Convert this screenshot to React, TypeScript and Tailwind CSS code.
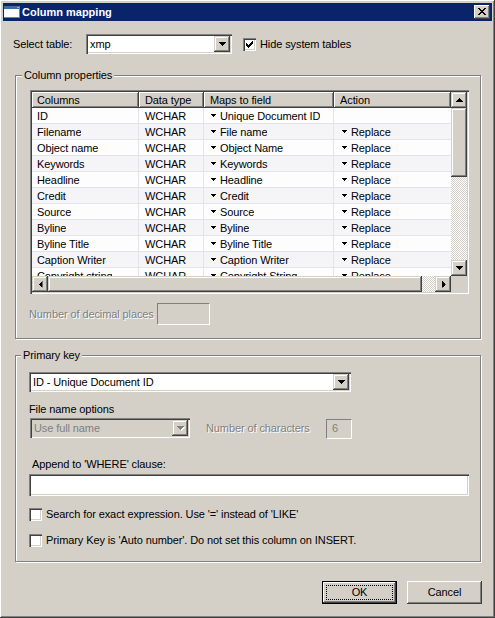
import React from "react";

// classic 3D edges
const sunken =
  "shadow-[inset_1px_1px_0_#808080,inset_2px_2px_0_#404040,inset_-1px_-1px_0_#ffffff,inset_-2px_-2px_0_#d4d0c8]";
const raised =
  "shadow-[inset_-1px_-1px_0_#404040,inset_1px_1px_0_#ffffff,inset_-2px_-2px_0_#808080,inset_2px_2px_0_#d4d0c8]";
const raisedSb =
  "shadow-[inset_-1px_-1px_0_#404040,inset_1px_1px_0_#d4d0c8,inset_-2px_-2px_0_#808080,inset_2px_2px_0_#ffffff]";
const headerEdge = "shadow-[inset_-1px_-1px_0_#404040,inset_1px_1px_0_#ffffff,inset_-2px_-2px_0_#808080]";
const etched = "border border-[#808080] shadow-[inset_1px_1px_0_#ffffff,1px_1px_0_#ffffff]";
const disabledText = "text-[#808080] [text-shadow:1px_1px_0_#ffffff]";
const checker =
  "bg-[image:repeating-conic-gradient(#ffffff_0%_25%,#d4d0c8_0%_50%)] bg-[length:2px_2px]";
const cell = "h-full flex items-center pt-[2px] leading-[13px]";

const rows = [
  ["ID", "WCHAR", "Unique Document ID", ""],
  ["Filename", "WCHAR", "File name", "Replace"],
  ["Object name", "WCHAR", "Object Name", "Replace"],
  ["Keywords", "WCHAR", "Keywords", "Replace"],
  ["Headline", "WCHAR", "Headline", "Replace"],
  ["Credit", "WCHAR", "Credit", "Replace"],
  ["Source", "WCHAR", "Source", "Replace"],
  ["Byline", "WCHAR", "Byline", "Replace"],
  ["Byline Title", "WCHAR", "Byline Title", "Replace"],
  ["Caption Writer", "WCHAR", "Caption Writer", "Replace"],
  ["Copyright string", "WCHAR", "Copyright String", "Replace"],
];

function Tri({ className = "", fill = "#000" }: { className?: string; fill?: string }) {
  return (
    <svg width="7" height="4" viewBox="0 0 7 4" className={className} shapeRendering="crispEdges">
      <path d="M0 0H7V1H6V2H5V3H4V4H3V3H2V2H1V1H0Z" fill={fill} />
    </svg>
  );
}

function SmallTri() {
  return (
    <svg width="5" height="3" viewBox="0 0 5 3" shapeRendering="crispEdges" className="shrink-0 -mt-[3px]">
      <path d="M0 0H5V1H4V2H3V3H2V2H1V1H0Z" fill="#000" />
    </svg>
  );
}

function Combo({ text, className = "", disabled }: { text: string; className?: string; disabled?: boolean }) {
  return (
    <div className={`flex h-[20px] p-[2px] ${sunken} ${disabled ? "bg-[#d4d0c8]" : "bg-white"} ${className}`}>
      <div className={`flex-1 pl-[2px] leading-[16px] truncate ${disabled ? "text-[#808080]" : "text-black"}`}>{text}</div>
      <div className={`w-[16px] h-[16px] flex items-center justify-center bg-[#d4d0c8] ${raisedSb}`}>
        {disabled ? (
          <div className="relative w-[7px] h-[4px]">
            <Tri className="absolute left-[1px] top-[1px]" fill="#ffffff" />
            <Tri className="absolute left-0 top-0" fill="#808080" />
          </div>
        ) : (
          <Tri />
        )}
      </div>
    </div>
  );
}

function Check({ checked }: { checked?: boolean }) {
  return (
    <div className={`w-[13px] h-[13px] shrink-0 bg-white flex items-center justify-center ${sunken}`}>
      {checked && (
        <svg width="7" height="7" viewBox="0 0 7 7" shapeRendering="crispEdges">
          <path
            d="M0 2h1v3H0z M1 3h1v3H1z M2 4h1v3H2z M3 3h1v3H3z M4 2h1v3H4z M5 1h1v3H5z M6 0h1v3H6z"
            fill="#000"
          />
        </svg>
      )}
    </div>
  );
}

function ScrollBtn({ rot }: { rot: string }) {
  return (
    <div className={`w-[16px] h-[16px] shrink-0 flex items-center justify-center bg-[#d4d0c8] ${raisedSb}`}>
      <Tri className={rot} />
    </div>
  );
}

function ColumnTable() {
  return (
    <div className={`w-[439px] h-[204px] p-[2px] bg-[#d4d0c8] ${sunken}`}>
      <div className="flex h-[184px]">
        <div className="w-[419px] overflow-hidden bg-white">
          <div className="grid grid-cols-[107px_65px_130px_117px] h-[16px]">
            {["Columns", "Data type", "Maps to field", "Action"].map((h, i) => (
              <div
                key={h}
                className={`bg-[#d4d0c8] leading-[16px] ${headerEdge} ${i === 0 ? "pl-[5px]" : "pl-[6px]"}`}
              >
                {h}
              </div>
            ))}
          </div>
          {rows.map((r, i) => (
            <div
              key={r[0]}
              className={`grid grid-cols-[107px_65px_130px_117px] h-[16px] ${i % 2 ? "bg-[#f5f5f8]" : "bg-[#fdfdfe]"}`}
            >
              <div className={`border-r border-b border-[#e4e3e8] pl-[5px] ${cell}`}>
                <span className="truncate">{r[0]}</span>
              </div>
              <div className={`border-r border-b border-[#e4e3e8] pl-[6px] ${cell}`}>{r[1]}</div>
              <div className={`border-r border-b border-[#e4e3e8] pl-[7px] gap-[4px] ${cell}`}>
                <SmallTri />
                <span className="truncate">{r[2]}</span>
              </div>
              <div className={`border-b border-[#e4e3e8] pl-[8px] gap-[4px] ${cell}`}>
                {r[3] && (
                  <>
                    <SmallTri />
                    <span>{r[3]}</span>
                  </>
                )}
              </div>
            </div>
          ))}
        </div>
        <div className="w-[16px] flex flex-col">
          <ScrollBtn rot="rotate-180" />
          <div className={`h-[69px] bg-[#d4d0c8] ${raisedSb}`} />
          <div className={`flex-1 ${checker}`} />
          <ScrollBtn rot="" />
        </div>
      </div>
      <div className="flex h-[16px]">
        <ScrollBtn rot="rotate-90" />
        <div className={`w-[374px] bg-[#d4d0c8] ${raisedSb}`} />
        <div className={`w-[13px] ${checker}`} />
        <ScrollBtn rot="-rotate-90" />
        <div className="w-[16px] bg-[#d4d0c8]" />
      </div>
    </div>
  );
}

export default function App() {
  return (
    <div
      className={`w-[495px] h-[618px] overflow-hidden bg-[#d4d0c8] p-[3px] text-[11px] leading-[13px] tracking-[-0.1px] text-black font-['Liberation_Sans',Arial,sans-serif] ${raised}`}
    >
      {/* Title bar */}
      <div className="flex items-center h-[18px] bg-[#0a246a] pl-[1px] pr-[2px]">
        <svg width="16" height="12" viewBox="0 0 16 12" shapeRendering="crispEdges">
          <rect x="0" y="0" width="16" height="12" fill="#ffffff" />
          <rect x="0" y="0" width="16" height="3" fill="#3a6ea5" />
          <rect x="13" y="1" width="2" height="1" fill="#e8a040" />
          <rect x="0" y="11" width="16" height="1" fill="#808080" />
          <rect x="15" y="0" width="1" height="12" fill="#808080" />
        </svg>
        <span className="ml-[2px] text-white font-bold tracking-normal">Column mapping</span>
        <div className={`ml-auto w-[16px] h-[14px] bg-[#d4d0c8] flex items-center justify-center ${raised}`}>
          <svg width="8" height="7" viewBox="0 0 8 7" shapeRendering="crispEdges" className="-mt-[1px]">
            <path
              d="M0 0h2v1H0z M6 0h2v1H6z M1 1h2v1H1z M5 1h2v1H5z M2 2h4v1H2z M3 3h2v1H3z M2 4h4v1H2z M1 5h2v1H1z M5 5h2v1H5z M0 6h2v1H0z M6 6h2v1H6z"
              fill="#000"
            />
          </svg>
        </div>
      </div>

      {/* Select table */}
      <div className="flex items-center h-[20px] mt-[13px] ml-[10px]">
        <span className="w-[73px]">Select table:</span>
        <Combo text="xmp" className="w-[146px]" />
        <div className="ml-[11px] flex items-center gap-[4px]">
          <Check checked />
          <span>Hide system tables</span>
        </div>
      </div>

      {/* Column properties */}
      <div className={`relative mt-[21px] ml-[12px] w-[466px] h-[264px] ${etched}`}>
        <span className="absolute -top-[7px] left-[6px] px-[2px] bg-[#d4d0c8]">Column properties</span>
        <div className="mt-[14px] ml-[14px]">
          <ColumnTable />
        </div>
        <div className="flex items-center mt-[9px] ml-[13px]">
          <span className={`w-[128px] ${disabledText}`}>Number of decimal places</span>
          <div className="w-[53px] h-[22px] border border-t-[#808080] border-l-[#808080] border-b-white border-r-white" />
        </div>
      </div>

      {/* Primary key */}
      <div className={`relative mt-[16px] ml-[12px] w-[466px] h-[207px] ${etched}`}>
        <span className="absolute -top-[7px] left-[5px] px-[2px] bg-[#d4d0c8]">Primary key</span>
        <Combo text="ID - Unique Document ID" className="mt-[16px] ml-[13px] w-[322px]" />
        <div className="mt-[11px] ml-[13px]">File name options</div>
        <div className="flex items-center h-[20px] mt-[2px] ml-[14px]">
          <Combo text="Use full name" disabled className="w-[160px]" />
          <span className={`ml-[16px] w-[120px] ${disabledText}`}>Number of characters</span>
          <div className="w-[26px] h-[20px] mt-[1px] border border-t-[#808080] border-l-[#808080] border-b-white border-r-white pl-[5px] leading-[17px] text-[#808080]">
            6
          </div>
        </div>
        <div className="mt-[20px] ml-[16px]">Append to 'WHERE' clause:</div>
        <div className={`mt-[3px] ml-[13px] w-[440px] h-[22px] bg-white ${sunken}`} />
        <div className="flex items-center gap-[4px] mt-[12px] ml-[13px] h-[13px]">
          <Check />
          <span>Search for exact expression. Use '=' instead of 'LIKE'</span>
        </div>
        <div className="flex items-center gap-[4px] mt-[13px] ml-[13px] h-[13px]">
          <Check />
          <span>Primary Key is 'Auto number'. Do not set this column on INSERT.</span>
        </div>
      </div>

      {/* Buttons */}
      <div className="flex justify-end gap-[10px] mt-[19px] pr-[10px]">
        <div className="w-[75px] h-[23px] border border-black">
          <div className={`w-full h-full p-[3px] bg-[#d4d0c8] ${raised}`}>
            <div className="w-full h-full border border-dotted border-black flex items-center justify-center">
              OK
            </div>
          </div>
        </div>
        <div className={`w-[75px] h-[23px] bg-[#d4d0c8] flex items-center justify-center ${raised}`}>Cancel</div>
      </div>
    </div>
  );
}
